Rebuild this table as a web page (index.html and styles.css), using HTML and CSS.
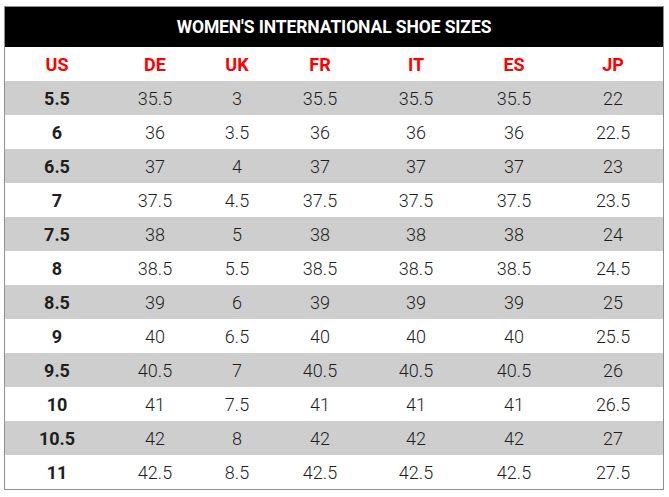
FILE: index.html
```html
<!DOCTYPE html>
<html lang="en">
<head>
<meta charset="utf-8">
<title>Women's International Shoe Sizes</title>
<link rel="stylesheet" href="styles.css">
</head>
<body>
<table class="sizes">
  <colgroup>
    <col class="c-us"><col class="c-de"><col class="c-uk"><col class="c-fr"><col class="c-it"><col class="c-es"><col class="c-jp">
  </colgroup>
  <thead>
    <tr class="title-row"><th colspan="7">WOMEN'S INTERNATIONAL SHOE SIZES</th></tr>
    <tr class="label-row"><th>US</th><th>DE</th><th>UK</th><th>FR</th><th>IT</th><th>ES</th><th>JP</th></tr>
  </thead>
  <tbody>
    <tr class="alt"><td>5.5</td><td>35.5</td><td>3</td><td>35.5</td><td>35.5</td><td>35.5</td><td>22</td></tr>
    <tr><td>6</td><td>36</td><td>3.5</td><td>36</td><td>36</td><td>36</td><td>22.5</td></tr>
    <tr class="alt"><td>6.5</td><td>37</td><td>4</td><td>37</td><td>37</td><td>37</td><td>23</td></tr>
    <tr><td>7</td><td>37.5</td><td>4.5</td><td>37.5</td><td>37.5</td><td>37.5</td><td>23.5</td></tr>
    <tr class="alt"><td>7.5</td><td>38</td><td>5</td><td>38</td><td>38</td><td>38</td><td>24</td></tr>
    <tr><td>8</td><td>38.5</td><td>5.5</td><td>38.5</td><td>38.5</td><td>38.5</td><td>24.5</td></tr>
    <tr class="alt"><td>8.5</td><td>39</td><td>6</td><td>39</td><td>39</td><td>39</td><td>25</td></tr>
    <tr><td>9</td><td>40</td><td>6.5</td><td>40</td><td>40</td><td>40</td><td>25.5</td></tr>
    <tr class="alt"><td>9.5</td><td>40.5</td><td>7</td><td>40.5</td><td>40.5</td><td>40.5</td><td>26</td></tr>
    <tr><td>10</td><td>41</td><td>7.5</td><td>41</td><td>41</td><td>41</td><td>26.5</td></tr>
    <tr class="alt"><td>10.5</td><td>42</td><td>8</td><td>42</td><td>42</td><td>42</td><td>27</td></tr>
    <tr><td>11</td><td>42.5</td><td>8.5</td><td>42.5</td><td>42.5</td><td>42.5</td><td>27.5</td></tr>
  </tbody>
</table>
</body>
</html>
```
FILE: styles.css
```css
html, body {
  margin: 0;
  padding: 0;
  background: #ffffff;
}
body {
  padding: 6px 0 0 4px;
}
.sizes {
  border-collapse: separate;
  border-spacing: 0;
  border: 1px solid #8f8f8f;
  width: 660px;
  table-layout: fixed;
  font-family: "Roboto", "Liberation Sans", sans-serif;
}
.c-us { width: 104px; }
.c-de { width: 92px; }
.c-uk { width: 72px; }
.c-fr { width: 94px; }
.c-it { width: 98px; }
.c-es { width: 98px; }
.c-jp { width: 100px; }
.sizes th, .sizes td {
  padding: 0;
  text-align: center;
  vertical-align: middle;
}
.title-row th {
  background: #000000;
  color: #ffffff;
  height: 40px;
  font-size: 17.5px;
  font-weight: 700;
  letter-spacing: -0.1px;
}
.label-row th {
  height: 34px;
  color: #ff0000;
  font-size: 18px;
  font-weight: 700;
}
.sizes td {
  height: 34px;
  color: #1e1e1e;
  font-size: 18px;
  font-weight: 300;
}
.sizes td:first-child {
  font-weight: 700;
}
.alt td {
  background: #cecece;
}
```
